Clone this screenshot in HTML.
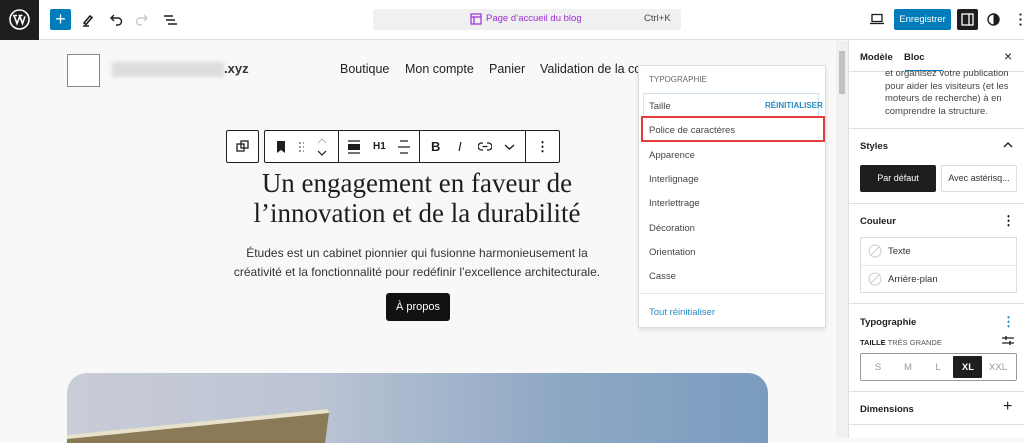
<!DOCTYPE html>
<html><head><meta charset="utf-8"><style>
*{box-sizing:border-box;margin:0;padding:0}
body{width:1024px;height:438px;overflow:hidden;font-family:"Liberation Sans",sans-serif;background:#f8f8f8;position:relative;color:#1e1e1e}
.a{position:absolute}
.top{left:0;top:0;width:1024px;height:40px;background:#fff;border-bottom:1px solid #e0e0e0}
.mi{left:649px;font-size:9.5px;color:#444}
.sb{left:848px;top:40px;width:176px;height:398px;background:#fff;border-left:1px solid #e0e0e0}
.hr{position:absolute;left:0;width:176px;height:1px;background:#e0e0e0}
.h{font-size:9.5px;font-weight:bold;color:#1e1e1e}
.nv{top:62px;font-size:12.5px;color:#222;white-space:nowrap}
.sz{top:322px;font-size:9.5px;color:#999;width:30px;text-align:center}
</style></head><body>
<div class="a top"></div>
<div class="a" style="left:0;top:0;width:39px;height:40px;background:#1e1e1e"></div>
<svg class="a" style="left:9px;top:9px" width="21" height="21" viewBox="0 0 21 21"><circle cx="10.5" cy="10.5" r="9.5" fill="none" stroke="#fff" stroke-width="1.6"/><path d="M4 6.5h4M5 6.5l3 8 2.5-6.5M9.5 6.5h4M10.5 6.5l3 8 2.5-7" fill="none" stroke="#fff" stroke-width="1.6"/></svg>
<div class="a" style="left:50px;top:9px;width:21px;height:21px;background:#007cba;border-radius:2px;color:#fff;font-size:18px;line-height:20px;text-align:center">+</div>
<svg class="a" style="left:80px;top:12px" width="16" height="16"><path d="M4 11l6-7 2 1.5-6 7z M3 14h6" stroke="#1e1e1e" stroke-width="1.6" fill="none"/></svg>
<svg class="a" style="left:108px;top:12px" width="16" height="16"><path d="M3 6h7a3.5 3.5 0 010 7H8M6 3L3 6l3 3" stroke="#1e1e1e" stroke-width="1.4" fill="none"/></svg>
<svg class="a" style="left:134px;top:12px" width="16" height="16"><path d="M13 6H6a3.5 3.5 0 000 7h2M10 3l3 3-3 3" stroke="#ccc" stroke-width="1.4" fill="none"/></svg>
<svg class="a" style="left:162px;top:12px" width="16" height="16"><path d="M2 4h9M4 8h9M6 12h9" stroke="#1e1e1e" stroke-width="1.4"/></svg>
<div class="a" style="left:373px;top:9px;width:308px;height:21px;background:#f0f0f0;border-radius:2px"></div>
<svg class="a" style="left:470px;top:13px" width="12" height="12"><rect x="1" y="1" width="10" height="10" fill="none" stroke="#9b2fd4" stroke-width="1.2"/><path d="M1 4h10M4 4v7" stroke="#9b2fd4" stroke-width="1.2"/></svg>
<div class="a" style="left:486px;top:13px;font-size:9.5px;color:#9b2fd4">Page d’accueil du blog</div>
<div class="a" style="left:644px;top:13px;font-size:9.5px;color:#444">Ctrl+K</div>
<svg class="a" style="left:870px;top:13px" width="14" height="12"><rect x="2" y="1.5" width="10" height="7" fill="none" stroke="#1e1e1e" stroke-width="1.3"/><path d="M0 10.5h14" stroke="#1e1e1e" stroke-width="1.3"/></svg>
<div class="a" style="left:894px;top:9px;width:57px;height:21px;background:#007cba;border-radius:2px;color:#fff;font-size:9.5px;line-height:21px;text-align:center">Enregistrer</div>
<div class="a" style="left:957px;top:9px;width:21px;height:21px;background:#1e1e1e;border-radius:2px"></div>
<svg class="a" style="left:961px;top:13px" width="13" height="13"><rect x="1" y="1" width="11" height="11" fill="none" stroke="#fff" stroke-width="1.3"/><path d="M8 1v11" stroke="#fff" stroke-width="1.3"/></svg>
<svg class="a" style="left:987px;top:13px" width="13" height="13"><circle cx="6.5" cy="6.5" r="5.5" fill="none" stroke="#1e1e1e" stroke-width="1.4"/><path d="M6.5 1a5.5 5.5 0 010 11z" fill="#1e1e1e"/></svg>
<div class="a" style="left:1019px;top:12px;width:3px;height:16px;background:radial-gradient(circle,#1e1e1e 1px,transparent 1.2px) 0 0/3px 5px"></div>

<!-- canvas -->
<div class="a" style="left:67px;top:54px;width:33px;height:33px;background:#fff;border:1px solid #888"></div>
<div class="a" style="left:112px;top:62px;width:112px;height:15px;background:#ddd;filter:blur(2px)"></div>
<div class="a" style="left:224px;top:61px;font-size:13px;font-weight:bold;color:#333">.xyz</div>
<div class="a nv" style="left:340px">Boutique</div>
<div class="a nv" style="left:405px">Mon compte</div>
<div class="a nv" style="left:489px">Panier</div>
<div class="a nv" style="left:540px">Validation de la co</div>

<div class="a" style="left:226px;top:130px;width:33px;height:33px;background:#fff;border:1px solid #1e1e1e;border-radius:2px"></div>
<svg class="a" style="left:236px;top:140px" width="13" height="13"><rect x="1" y="4" width="7" height="7" fill="none" stroke="#1e1e1e" stroke-width="1.3"/><rect x="5" y="1" width="7" height="7" fill="none" stroke="#1e1e1e" stroke-width="1.3"/></svg>
<div class="a" style="left:264px;top:130px;width:296px;height:33px;background:#fff;border:1px solid #1e1e1e;border-radius:2px"></div>
<div class="a" style="left:338px;top:131px;width:1px;height:31px;background:#1e1e1e"></div>
<div class="a" style="left:419px;top:131px;width:1px;height:31px;background:#1e1e1e"></div>
<div class="a" style="left:525px;top:131px;width:1px;height:31px;background:#1e1e1e"></div>
<svg class="a" style="left:276px;top:141px" width="10" height="12"><path d="M1 0h8v12l-4-3-4 3z" fill="#1e1e1e"/></svg>
<div class="a" style="left:298px;top:141px;width:6px;height:11px;background:radial-gradient(circle,#777 0.8px,transparent 1px) 0 0/4px 4px"></div>
<svg class="a" style="left:316px;top:137px" width="12" height="20"><path d="M2 6l4-4 4 4" stroke="#bbb" stroke-width="1.2" fill="none"/><path d="M2 14l4 4 4-4" stroke="#1e1e1e" stroke-width="1.2" fill="none"/></svg>
<svg class="a" style="left:347px;top:140px" width="14" height="14"><path d="M1 1h12M1 13h12" stroke="#1e1e1e" stroke-width="1.3"/><rect x="1" y="4" width="12" height="6" fill="#1e1e1e"/></svg>
<div class="a" style="left:373px;top:141px;font-size:10px;font-weight:bold">H1</div>
<svg class="a" style="left:397px;top:140px" width="14" height="14"><path d="M3 1h8M1 7h12M3 13h8" stroke="#1e1e1e" stroke-width="1.3"/></svg>
<div class="a" style="left:431px;top:139px;font-size:13px;font-weight:bold">B</div>
<div class="a" style="left:458px;top:139px;font-size:13px;font-style:italic">I</div>
<svg class="a" style="left:478px;top:142px" width="14" height="10"><path d="M5 1H3.5a3.5 3.5 0 000 7H5M9 1h1.5a3.5 3.5 0 010 7H9M4.5 4.5h5" stroke="#1e1e1e" stroke-width="1.3" fill="none"/></svg>
<svg class="a" style="left:504px;top:143px" width="11" height="8"><path d="M1 2l4.5 4 4.5-4" stroke="#1e1e1e" stroke-width="1.4" fill="none"/></svg>
<div class="a" style="left:541px;top:140px;width:3px;height:13px;background:radial-gradient(circle,#1e1e1e 1px,transparent 1.2px) 0 0/3px 4.5px"></div>

<div class="a" style="left:200px;top:168px;width:434px;text-align:center;font-family:'Liberation Serif',serif;font-size:27px;line-height:30px;color:#1e1e1e">Un engagement en faveur de l’innovation et de la durabilité</div>
<div class="a" style="left:227px;top:244px;width:380px;text-align:center;font-size:12px;line-height:19px;color:#333">Études est un cabinet pionnier qui fusionne harmonieusement la créativité et la fonctionnalité pour redéfinir l’excellence architecturale.</div>
<div class="a" style="left:386px;top:293px;width:64px;height:28px;background:#111;border-radius:3px;color:#fff;font-size:11px;line-height:28px;text-align:center">À propos</div>

<div class="a" style="left:67px;top:373px;width:701px;height:70px;border-radius:20px 20px 0 0;overflow:hidden;background:linear-gradient(90deg,#c9ccd6 0%,#bcc4d4 35%,#8ea8c4 70%,#7a9cbf 100%)">
<svg class="a" style="left:0;top:0" width="701" height="70"><polygon points="0,62 261,36 262,40 0,66" fill="#e8e2cc"/><polygon points="0,66 262,40 258,70 0,70" fill="#8a7a58"/></svg>
</div>

<!-- popover -->
<div class="a" style="left:638px;top:65px;width:188px;height:263px;background:#fff;border:1px solid #ddd;box-shadow:0 2px 4px rgba(0,0,0,.1)"></div>
<div class="a" style="left:649px;top:75px;font-size:8px;color:#666">TYPOGRAPHIE</div>
<div class="a" style="left:643px;top:93px;width:176px;height:24px;border:1px solid #cfe3f0"></div>
<div class="a mi" style="top:101px">Taille</div>
<div class="a" style="left:765px;top:101px;font-size:8px;font-weight:bold;color:#2a8bc4">RÉINITIALISER</div>
<div class="a" style="left:641px;top:116px;width:184px;height:26px;border:2px solid #e53d3d"></div>
<div class="a mi" style="top:125px">Police de caractères</div>
<div class="a mi" style="top:150px">Apparence</div>
<div class="a mi" style="top:174px">Interlignage</div>
<div class="a mi" style="top:198px">Interlettrage</div>
<div class="a mi" style="top:223px">Décoration</div>
<div class="a mi" style="top:247px">Orientation</div>
<div class="a mi" style="top:271px">Casse</div>
<div class="a" style="left:639px;top:293px;width:186px;height:1px;background:#e8e8e8"></div>
<div class="a" style="left:649px;top:307px;font-size:9.5px;color:#2a8bc4">Tout réinitialiser</div>

<!-- scrollbar -->
<div class="a" style="left:836px;top:41px;width:12px;height:397px;background:#f0f0f0"></div>
<div class="a" style="left:839px;top:51px;width:6px;height:43px;background:#c1c1c1"></div>

<!-- sidebar -->
<div class="a sb">
<div class="a" style="left:11px;top:12px;font-size:9.5px;font-weight:bold">Modèle</div>
<div class="a" style="left:55px;top:12px;font-size:9.5px;font-weight:bold">Bloc</div>
<div class="a" style="left:56px;top:30px;width:38px;height:2px;background:#007cba"></div>
<div class="a" style="left:155px;top:8px;font-size:14px">×</div>
<div class="hr" style="top:31px"></div>
<div class="a" style="left:36px;top:28px;width:130px;font-size:9.5px;line-height:12.5px;color:#444">et organisez votre publication pour aider les visiteurs (et les moteurs de recherche) à en comprendre la structure.</div>
<div class="hr" style="top:88px"></div>
<div class="a h" style="left:11px;top:101px">Styles</div>
<svg class="a" style="left:154px;top:101px" width="10" height="8"><path d="M1 6l4-4 4 4" stroke="#1e1e1e" stroke-width="1.4" fill="none"/></svg>
<div class="a" style="left:11px;top:125px;width:76px;height:27px;background:#1e1e1e;border-radius:2px;color:#fff;font-size:9px;line-height:27px;text-align:center">Par défaut</div>
<div class="a" style="left:92px;top:125px;width:76px;height:27px;border:1px solid #ddd;border-radius:2px;font-size:9px;line-height:25px;text-align:center;color:#333">Avec astérisq...</div>
<div class="hr" style="top:163px"></div>
<div class="a h" style="left:11px;top:176px">Couleur</div>
<div class="a" style="left:158px;top:174px;width:3px;height:13px;background:radial-gradient(circle,#1e1e1e 1px,transparent 1.2px) 0 0/3px 4.5px"></div>
<div class="a" style="left:11px;top:197px;width:157px;height:56px;border:1px solid #ddd"></div>
<div class="a" style="left:12px;top:225px;width:155px;height:1px;background:#e8e8e8"></div>
<svg class="a" style="left:19px;top:204px" width="14" height="14"><circle cx="7" cy="7" r="6" fill="none" stroke="#ccc"/><path d="M3 11l8-8" stroke="#ccc"/></svg>
<div class="a" style="left:39px;top:206px;font-size:9.5px;color:#333">Texte</div>
<svg class="a" style="left:19px;top:232px" width="14" height="14"><circle cx="7" cy="7" r="6" fill="none" stroke="#ccc"/><path d="M3 11l8-8" stroke="#ccc"/></svg>
<div class="a" style="left:39px;top:234px;font-size:9.5px;color:#333">Arrière-plan</div>
<div class="hr" style="top:263px"></div>
<div class="a h" style="left:11px;top:277px">Typographie</div>
<div class="a" style="left:158px;top:275px;width:3px;height:13px;background:radial-gradient(circle,#2a8bc4 1px,transparent 1.2px) 0 0/3px 4.5px"></div>
<div class="a" style="left:11px;top:298px;font-size:7.5px;color:#555"><b style="color:#1e1e1e">TAILLE</b> TRÈS GRANDE</div>
<svg class="a" style="left:153px;top:295px" width="12" height="11"><path d="M0 3h12M0 8h12" stroke="#1e1e1e" stroke-width="1.2"/><path d="M4 1v4M8 6v4" stroke="#1e1e1e" stroke-width="1.4"/></svg>
<div class="a" style="left:11px;top:313px;width:157px;height:28px;border:1px solid #999;border-radius:2px"></div>
<div class="a" style="left:104px;top:316px;width:29px;height:22px;background:#1e1e1e;border-radius:1px"></div>
<div class="a sz" style="left:14px">S</div>
<div class="a sz" style="left:44px">M</div>
<div class="a sz" style="left:74px">L</div>
<div class="a sz" style="left:104px;color:#fff;font-weight:bold">XL</div>
<div class="a sz" style="left:134px">XXL</div>
<div class="hr" style="top:351px"></div>
<div class="a h" style="left:11px;top:364px">Dimensions</div>
<div class="a" style="left:154px;top:358px;font-size:16px">+</div>
<div class="hr" style="top:384px"></div>
</div>
</body></html>
